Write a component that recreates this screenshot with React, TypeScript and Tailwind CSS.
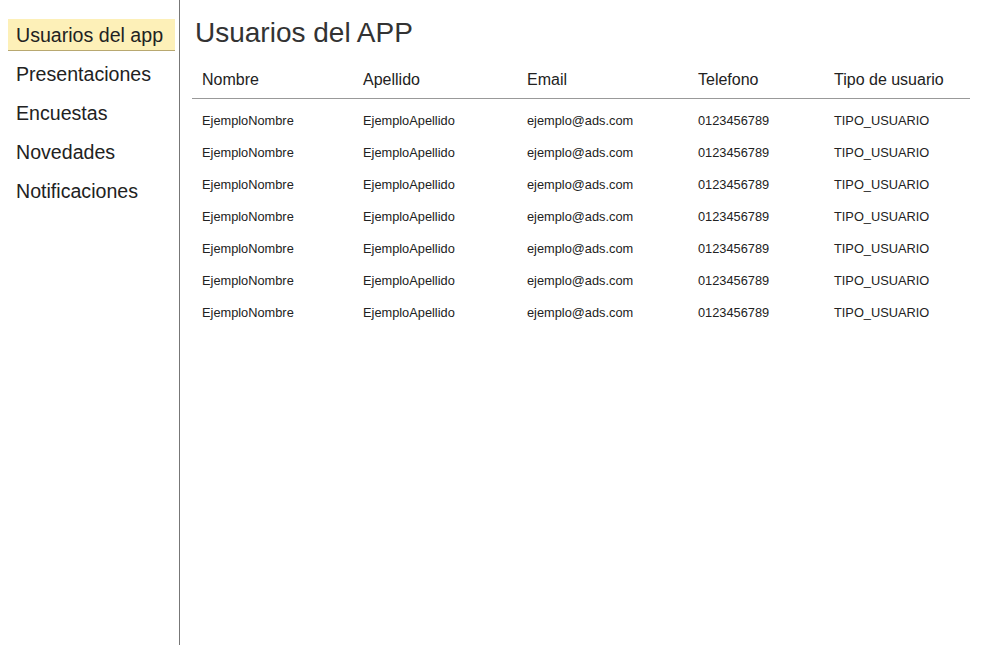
import React from "react";

const rows = Array.from({ length: 7 });
const nav = ["Usuarios del app", "Presentaciones", "Encuestas", "Novedades", "Notificaciones"];

export default function App() {
  return (
    <div className="flex w-[1000px] h-[665px] bg-white text-[#222]" style={{ fontFamily: '"Liberation Sans", Arial, sans-serif' }}>
      <div className="w-[180px] h-[645px] border-r border-[#777] pt-[19px] pl-[8px] pr-[4px] shrink-0">
        {nav.map((n, i) =>
          i === 0 ? (
            <div key={n} className="h-[32px] mb-[7px] pl-[8px] pt-[1px] text-[19.6px] leading-[31px] text-[#222] bg-[#fdf0b8] border-b border-[#b8a870]">
              {n}
            </div>
          ) : (
            <div key={n} className="h-[39px] pl-[8px] pt-[1px] text-[19.6px] leading-[31px] text-[#222]">
              {n}
            </div>
          )
        )}
      </div>
      <div className="flex-1 pl-[12px] pr-[29px]">
        <h1 className="text-[28px] leading-[34px] mt-[16px] pl-[3px] text-[#333]">Usuarios del APP</h1>
        <table className="w-[778px] mt-[12px] border-collapse">
          <thead>
            <tr className="border-b border-[#999] text-[16px] text-left">
              <th className="font-normal w-[161px] pl-[10px] h-[36px] align-middle">Nombre</th>
              <th className="font-normal w-[164px] pl-[10px]">Apellido</th>
              <th className="font-normal w-[171px] pl-[10px]">Email</th>
              <th className="font-normal w-[136px] pl-[10px]">Telefono</th>
              <th className="font-normal pl-[10px]">Tipo de usuario</th>
            </tr>
          </thead>
          <tbody className="text-[12.8px]">
            <tr className="h-[7px]">
              <td colSpan={5}></td>
            </tr>
            {rows.map((_, i) => (
              <tr key={i} className="h-[32px]">
                <td className="pl-[10px] align-middle">EjemploNombre</td>
                <td className="pl-[10px]">EjemploApellido</td>
                <td className="pl-[10px]">ejemplo@ads.com</td>
                <td className="pl-[10px]">0123456789</td>
                <td className="pl-[10px]">TIPO_USUARIO</td>
              </tr>
            ))}
          </tbody>
        </table>
      </div>
    </div>
  );
}
